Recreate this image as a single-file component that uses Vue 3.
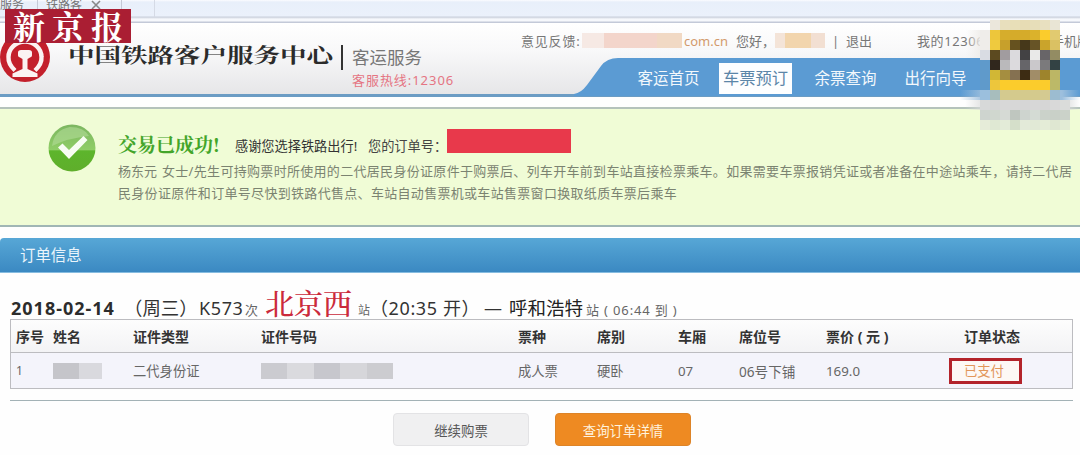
<template>
  <div class="page">
    <div class="tabs">
      <span class="tab first">服务</span>
      <span class="tab second">铁路客</span>
      <span class="tab third">
        <svg width="10" height="10" viewBox="0 0 10 10"><path d="M1 1L9 9M9 1L1 9" stroke="#888" stroke-width="1.600" /></svg>
      </span>
      <span class="tab fourth"></span>
    </div>

    <header class="header">
      <svg class="logo" viewBox="0 0 50 50">
        <circle cx="25" cy="25" r="25" fill="#c3202b" />
        <path d="M15 38.500Q8 32 8.500 25A16.500 15.500 0 0 1 41.500 25Q42 32 35 38.500" fill="none" stroke="#fbf3f2" stroke-width="4.400" />
        <path d="M18 20.500q0-2.500 3-2.500h8q3 0 3 2.500v3q0 1.500-2 2L27.500 27V37l10 4.500V45h-25v-3.500l10-4.500V27L20 25.500q-2-.5-2-2z" fill="#fbf3f2" />
      </svg>
      <h1 class="brand"><span>中国铁路客户服务中心</span></h1>
      <div class="sub">
        <div class="sub-name">客运服务</div>
        <div class="sub-tel">客服热线:12306</div>
      </div>
      <div class="right">
        <div class="user">
          <span class="feedback">意见反馈:</span>
          <span class="mask mail"></span>
          <span class="domain">com.cn</span>
          <span class="hello">您好，</span>
          <span class="mask name"></span>
          <span class="bar">|</span>
          <span class="logout">退出</span>
          <span class="my">我的12306</span>
          <span class="mobile">手机版</span>
        </div>
        <nav class="nav">
          <svg class="nav-edge" viewBox="0 0 50 38" preserveAspectRatio="none">
            <path d="M0 36Q7 35 13 27L27 8Q33 0 44 0H50V38H0z" fill="#5b9bd3" />
          </svg>
          <a v-for="n in navs" :key="n" :class="{ active: n === '车票预订' }">{{ n }}</a>
        </nav>
      </div>
    </header>

    <section class="notice">
      <svg class="ok" viewBox="0 0 48 48">
        <defs>
          <linearGradient id="okFill" x1="0" y1="0" x2="0" y2="1">
            <stop offset="0" stop-color="#7cb661" />
            <stop offset=".54" stop-color="#8fcd66" />
            <stop offset=".56" stop-color="#5db52c" />
            <stop offset="1" stop-color="#5fae2b" />
          </linearGradient>
        </defs>
        <circle cx="24" cy="24" r="23.500" fill="url(#okFill)" />
        <path d="M4 22Q6 6 22 3Q36 3 41 12Q20 14 4 22z" fill="#b2dc97" opacity=".6" />
        <path d="M10 23.500L14.500 19.500L21 26L35.500 12L39.500 16L21 35z" fill="#f8fdf3" />
      </svg>
      <div class="notice-text">
        <div class="notice-head">
          <strong>交易已成功!</strong>
          <span class="thanks">感谢您选择铁路出行!</span>
          <span class="order-no">您的订单号：</span>
          <i class="order-mask"></i>
        </div>
        <p><span class="who">杨东元</span><span class="line1">女士/先生可持购票时所使用的二代居民身份证原件于购票后、列车开车前到车站直接检票乘车。如果需要车票报销凭证或者准备在中途站乘车，请持二代居</span></p>
        <p class="line2">民身份证原件和订单号尽快到铁路代售点、车站自动售票机或车站售票窗口换取纸质车票后乘车</p>
      </div>
    </section>

    <div class="bar-title">订单信息</div>

    <div class="trip">
      <b class="date">2018-02-14</b>
      <span class="week">（周三）</span>
      <span class="train">K573</span>
      <span class="ci">次</span>
      <span class="from">北京西</span>
      <span class="zhan">站</span>
      <span class="depart">（20:35 开）</span>
      <span class="dash">—</span>
      <span class="to">呼和浩特</span>
      <span class="arrive">站 ( 06:44 到 )</span>
    </div>

    <div class="table">
      <div class="tr th">
        <span v-for="h in heads" :key="h">{{ h }}</span>
      </div>
      <div class="tr td">
        <span class="idx">1</span>
        <span><i class="px px-name"></i></span>
        <span>二代身份证</span>
        <span><i class="px px-id"></i></span>
        <span>成人票</span>
        <span>硬卧</span>
        <span>07</span>
        <span class="seat">06号下铺</span>
        <span>169.0</span>
        <span class="status">已支付</span>
      </div>
    </div>
    <div class="rule"></div>

    <div class="btns">
      <button class="btn gray">继续购票</button>
      <button class="btn orange">查询订单详情</button>
    </div>

    <div class="press">新京报</div>

    <svg class="mosaic" width="130" height="120" viewBox="950 20 130 120" shape-rendering="crispEdges">
      <defs>
        <linearGradient id="haze" x1="0" x2="1">
          <stop offset="0" stop-color="#efedea" stop-opacity="0" />
          <stop offset="1" stop-color="#efedea" />
        </linearGradient>
        <linearGradient id="hazeBlue" x1="0" x2="1">
          <stop offset="0" stop-color="#9dbfdd" stop-opacity="0" />
          <stop offset=".2" stop-color="#9dbfdd" />
          <stop offset=".85" stop-color="#9dbfdd" />
          <stop offset="1" stop-color="#9dbfdd" stop-opacity="0" />
        </linearGradient>
        <linearGradient id="hazeGray" x1="0" x2="1">
          <stop offset="0" stop-color="#d9dada" stop-opacity="0" />
          <stop offset=".2" stop-color="#d9dada" />
          <stop offset=".85" stop-color="#d9dada" />
          <stop offset="1" stop-color="#d9dada" stop-opacity="0" />
        </linearGradient>
      </defs>
      <rect x="966" y="30" width="16" height="28" fill="url(#haze)" />
      <rect x="960" y="90" width="120" height="10" fill="url(#hazeBlue)" />
      <rect x="965" y="100" width="115" height="10" fill="url(#hazeGray)" />
      <template v-for="(row, r) in cells" :key="r">
        <template v-for="(c, i) in row" :key="i">
          <rect v-if="c" :x="980 + i * 10" :y="20 + r * 10" width="10" height="10" :fill="c" />
        </template>
      </template>
    </svg>
  </div>
</template>

<script setup>
const navs = ['客运首页', '车票预订', '余票查询', '出行向导'];
const heads = ['序号', '姓名', '证件类型', '证件号码', '票种', '席别', '车厢', '席位号', '票价 ( 元 )', '订单状态'];

// 10px mosaic blocks, top to bottom
const cells = [
  ['', '#ebe7dc', '#e8dfbd', '#e8dfb8', '#e7dcb4', '#e7deb9', '#e8e0c0', '#e9e5d5', ''],
  ['#efedea', '#edc63b', '#d6ad2c', '#d5ab2a', '#d5ab2a', '#dbb22b', '#fbcc2c', '#e1ca70', ''],
  ['#efedea', '#efca3e', '#c7a02b', '#66521f', '#46381a', '#675426', '#caa42b', '#dac163', ''],
  ['#d9dce3', '#5c4a20', '#a19c9f', '#dbdadd', '#434244', '#e9e9e8', '#686568', '#938c63', ''],
  ['#5f9acb', '#30271d', '#bab9bb', '#dcdadd', '#666569', '#cac8cb', '#7b7a7c', '#334244', ''],
  ['#5f9acb', '#d1b735', '#a58e40', '#857151', '#3d2c13', '#a18d68', '#9e842c', '#bcb665', ''],
  ['#5f9acb', '#edc63c', '#fbcc2c', '#fbcc2c', '#fbcc2c', '#fbcc2c', '#fbcc2c', '#bcb968', ''],
  ['#9bbfdd', '#a7bdbd', '#d4ca8f', '#d4ca8d', '#d4ca8d', '#d4ca8d', '#d4ca91', '#9cbcd0', ''],
  ['#d7d9d9', '#d5d6d6', '#d8d8d8', '#d7d7d7', '#d6d6d6', '#d7d7d7', '#d6d6d6', '#d9d9d9', '#dadcda'],
  ['#ced4cf', '#d0d7cf', '#d6dad5', '#bfc6bf', '#ced4cf', '#d4dbd4', '#cbd2ca', '#c9d0c8', '#cbd2c9'],
  ['#e6ecd9', '#dfe8d3', '#e3ebd8', '#d5dfca', '#e3ead9', '#e1e9d6', '#e4ecd7', '#dfe7d2', '#e3ecd5']
];
</script>

<style>
body { margin:0; background:#fff; }
</style>

<style scoped>
.page { position:relative; width:1080px; height:455px; overflow:hidden; background:#fefefe; font-family:"Noto Sans", "Noto Sans CJK SC", sans-serif; color:#666; white-space:nowrap; }
.page * { box-sizing:border-box; }

.tabs { display:flex; height:23px; background:linear-gradient(#fbfcff 0, #e8effa 2px, #ebf1fb 16px, #c9cfdb 17px, #f6f8fc 19px, #f6f8fc 21px, #c3c9d8 22px); font-size:12px; line-height:9px; color:#777; }
.tab { height:17px; border-right:1px solid #c5cad6; }
.tab.first { width:38px; }
.tab.second { width:47px; padding-left:8px; border:0; }
.tab.third { width:37px; padding-left:6px; }
.tab.fourth { width:33px; border-color:#d5dae5; }

.header { display:flex; height:74px; background:linear-gradient(#fff, #f8f8f9 40%, #e6e6e8); border-bottom:3px solid #6b9cc4; }
.logo { width:50px; height:50px; margin-top:9px; flex:none; }
.brand { margin:18px 0 0 18px; width:264px; height:28px; flex:none; font-family:"Noto Serif CJK SC", "Noto Sans CJK SC", serif; font-size:20px; font-weight:700; line-height:28px; color:#2b2b2b; }
.brand span { display:inline-block; transform:scaleX(1.325); transform-origin:0 0; }
.sub { width:170px; flex:none; margin-top:22px; padding-left:9px; height:25px; border-left:2px solid #333; margin-left:9px; }
.sub-name { font-size:17.5px; line-height:25px; color:#777; }
.sub-tel { font-size:13px; line-height:18px; color:#e57583; margin-top:1px; letter-spacing:.95px; }

.right { flex:1; min-width:0; margin-left:10px; display:flex; flex-direction:column; justify-content:space-between; }
.user { display:flex; height:36px; align-items:center; font-size:13px; color:#777; }
.user span { flex:none; }
.feedback { width:61px; letter-spacing:.8px; }
.mask { height:15px; }
.mail { width:100px; background:linear-gradient(90deg, #f6e9e4 0 22%, #f3d5cb 22% 75%, #f1d9c4 75%); }
.domain { width:54px; padding-left:2px; color:#d39a6c; font-size:13px; }
.hello { width:39px; }
.mask.name { width:50px; background:linear-gradient(90deg, #f4e4d8 0 20%, #f2d5ad 20% 72%, #f2dfd2 72%); }
.bar { width:21px; padding-left:7px; }
.logout { width:71px; }
.my { width:134px; letter-spacing:.6px; }
.nav { display:flex; height:38px; margin-left:103px; background:#5b9bd3; font-size:15.5px; line-height:31px; color:#f3f8fc; margin-bottom:-2px; position:relative; padding-left:8px; padding-top:5px; }
.nav-edge { position:absolute; left:-50px; top:0; width:50px; height:38px; }
.nav a { flex:none; width:73px; height:31px; text-align:center; margin-right:17px; }
.nav a:first-of-type { margin-right:14px; }
.nav a.active { background:#fdfeff; color:#5c86a8; font-size:16.3px; }

.notice { display:flex; height:120px; margin-top:10px; background:#f0fcd6; border-top:2px solid #b4c2bb; border-bottom:2px solid #a0b6b5; }
.ok { width:48px; height:48px; margin:15px 22px 0 48px; flex:none; }
.notice-head { display:flex; align-items:center; height:23px; margin-top:20px; font-size:13.2px; color:#444; }
.notice-head strong { width:117px; font-family:"Noto Serif CJK SC", "Noto Sans CJK SC", serif; font-size:19px; line-height:23px; font-weight:700; color:#43a52a; margin-top:6px; }
.thanks { width:133px; margin-top:9px; color:#333; }
.order-no { width:79px; margin-top:9px; }
.order-mask { width:124px; height:24px; background:#e8394b; margin-top:0; }
.notice p { display:flex; margin:0; font-size:13px; line-height:22px; color:#7b8371; }
.notice-head + p { margin-top:8px; }
.who { width:44px; }
.line1 { letter-spacing:.31px; }
.line2 { letter-spacing:.31px; }

.bar-title { height:35px; margin-top:11px; padding-left:20px; background:linear-gradient(#57a7d6, #3b89c2); border-bottom:1px solid #86bce0; border-radius:4px 0 0 0; font-size:15.4px; line-height:36px; color:#e9f4fb; }

.trip { display:flex; align-items:baseline; height:46px; margin-left:11px; font-size:18px; color:#333; }
.trip > * { flex:none; line-height:60px; }
.date { width:113px; font-family:"Noto Sans", sans-serif; letter-spacing:1px; color:#2c2c2c; }
.week { width:75px; font-size:18.4px; }
.train { width:46px; letter-spacing:.6px; }
.ci { width:20px; font-size:13px; color:#666; }
.from { width:93px; font-family:"Noto Serif CJK SC", "Noto Sans CJK SC", serif; font-size:29px; font-weight:500; color:#cb2a3b; }
.zhan { width:12px; font-size:12px; color:#666; }
.depart { width:114px; font-size:18px; letter-spacing:.6px; }
.dash { width:25px; }
.to { width:77px; font-size:18.5px; color:#222; }
.arrive { font-size:13px; color:#666; letter-spacing:.85px; }

.table { width:1063px; margin-left:10px; border:1px solid #bcbcc0; }
.tr { display:grid; grid-template-columns:37px 80px 128px 257px 79px 81px 61px 87px 138px 1fr; padding-left:5px; align-items:center; font-size:13.3px; color:#666; }
.th { height:33px; background:linear-gradient(#fdfdfd, #f3f3f5); border-bottom:1px solid #bcbcc0; font-weight:700; font-size:14px; color:#333; }
.td { height:35px; background:#f4f4fb; }
.idx { font-size:12px; }
.px { display:block; height:16px; }
.px-name { width:49px; background:linear-gradient(90deg, #c5c5ca 0 54%, #d9d9de 54%); }
.px-id { width:132px; background:linear-gradient(90deg, #cbcbd0 0 20%, #dadade 20% 40%, #c7c7cd 40% 60%, #d6d6da 60% 80%, #ccccd0 80%); }
.seat { font-size:13.6px; }
.status { display:flex; align-items:center; width:73px; height:26px; margin-left:-15px; padding-left:12px; border:3px solid #b3232b; background:#fdf8f5; color:#e2965a; }
.rule { width:1063px; margin:11px 0 0 10px; border-top:1px solid #a3b2b6; }

.btns { display:flex; gap:26px; margin:12px 0 0 393px; }
.btn { width:136px; height:33px; padding:0; border-radius:4px; font-family:inherit; font-size:13.4px; }
.gray { background:#f0f0f1; border:1px solid #e3e3e5; color:#555; }
.orange { background:#ee8a22; border:1px solid #dd8428; color:#fff3df; }

/* press watermark over the page corner */
.press { position:absolute; left:5px; top:9px; width:126px; height:34px; padding-left:8px; background:#aa1e33; color:#fff; font-family:"Noto Serif CJK SC", "Noto Sans CJK SC", serif; font-size:32px; line-height:32px; font-weight:700; letter-spacing:7px; }
.mosaic { position:absolute; left:950px; top:20px; }
</style>
